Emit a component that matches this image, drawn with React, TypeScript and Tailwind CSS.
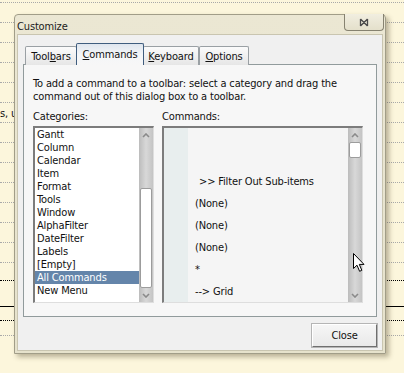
import React from "react";

const FONT = "[font-family:'DejaVu_Sans_Condensed','Liberation_Sans',sans-serif]";

const categories = [
  "Gantt",
  "Column",
  "Calendar",
  "Item",
  "Format",
  "Tools",
  "Window",
  "AlphaFilter",
  "DateFilter",
  "Labels",
  "[Empty]",
  "All Commands",
  "New Menu",
];

const commands = [">> Filter Out Sub-items", "(None)", "(None)", "(None)", "*", "--> Grid"];

function Chevron({ up }: { up?: boolean }) {
  return (
    <svg width="8" height="5" viewBox="0 0 8 5">
      <polyline
        points={up ? "1,4 4,1 7,4" : "1,1 4,4 7,1"}
        fill="none"
        stroke="#8a8a8a"
        strokeWidth="1.6"
      />
    </svg>
  );
}

function ScrollBar({ thumbTop, thumbHeight }: { thumbTop: string; thumbHeight: string }) {
  return (
    <div className="flex w-[14px] shrink-0 flex-col bg-linear-to-r from-[#bcbcbc] via-[#d8d8d8] to-[#c4c4c4]">
      <div className="flex h-[14px] shrink-0 items-center justify-center">
        <Chevron up />
      </div>
      <div className={`${thumbTop} shrink-0`} />
      <div className={`${thumbHeight} mx-[1px] shrink-0 rounded-[2px] border border-[#9c9c9c] bg-white`} />
      <div className="flex-1" />
      <div className="flex h-[14px] shrink-0 items-center justify-center">
        <Chevron />
      </div>
    </div>
  );
}

function Tab({ u, rest, pre, selected, w }: { pre?: string; u: string; rest: string; selected?: boolean; w: string }) {
  if (selected) {
    return (
      <div
        className={`${w} -mx-[1px] z-10 flex h-[22px] items-center justify-center rounded-t-[2px] border border-b-0 border-[#3f5d7e] bg-linear-to-b from-[#dfe6ee] via-[#f4f6f8] to-[#f7f7f7] text-[#111]`}
      >
        <span>
          {pre}
          <span className="underline">{u}</span>
          {rest}
        </span>
      </div>
    );
  }
  return (
    <div
      className={`${w} flex h-[19px] items-center justify-center rounded-t-[2px] border border-b-0 border-[#9aa0a4] bg-linear-to-b from-[#fbfbfb] to-[#e6e6e6] text-[#111]`}
    >
      <span>
        {pre}
        <span className="underline">{u}</span>
        {rest}
      </span>
    </div>
  );
}

function Cursor() {
  return (
    <svg width="13" height="20" viewBox="0 0 13 20" className="absolute left-[353px] top-[253px]">
      <path
        d="M0.5 0.5 L0.5 15.5 L4 12.2 L6.6 18.3 L8.8 17.3 L6.3 11.4 L11 11.4 Z"
        fill="#fff"
        stroke="#000"
        strokeWidth="1"
        strokeLinejoin="miter"
      />
    </svg>
  );
}

export default function App() {
  return (
    <div className={`relative h-[373px] w-[404px] overflow-hidden bg-[#fcf6dc] text-[11px] leading-[13px] tracking-[-0.15px] ${FONT}`}>
      {/* page behind the dialog */}
      <div className="flex flex-col">
        <div className="h-[3px] border-b border-dotted border-[#a9a9a9]" />
        <div className="h-[20px] border-b border-dotted border-[#a9a9a9]" />
        <div className="h-[20px] border-b border-dotted border-[#a9a9a9]" />
        <div className="h-[20px] border-b border-dotted border-[#a9a9a9]" />
        <div className="h-[20px] border-b border-dotted border-[#a9a9a9]" />
        <div className="h-[20px] border-b border-dotted border-[#a9a9a9]" />
        <div className="flex h-[20px] items-center border-b border-dotted border-[#a9a9a9] pt-[1px] text-[#111]">
          <span className="w-[14px] overflow-hidden whitespace-nowrap">s, u</span>
        </div>
        <div className="h-[20px] border-b border-dotted border-[#a9a9a9]" />
        <div className="h-[20px] border-b border-dotted border-[#a9a9a9]" />
        <div className="h-[20px] border-b border-dotted border-[#a9a9a9]" />
        <div className="h-[20px] border-b border-dotted border-[#a9a9a9]" />
        <div className="h-[20px] border-b border-dotted border-[#a9a9a9]" />
        <div className="h-[20px] border-b border-dotted border-[#a9a9a9]" />
        <div className="h-[20px] border-b border-dotted border-[#a9a9a9]" />
        <div className="h-[18px] border-b border-dotted border-black" />
        <div className="h-[26px] border-b border-black" />
        <div className="h-[14px] border-b border-dotted border-black" />
        <div className="h-[15px] border-b border-dotted border-[#a9a9a9]" />
      </div>

      {/* Customize dialog */}
      <div className="absolute left-[14px] top-[14px] flex h-[340px] w-[372px] flex-col rounded-t-[4px] border border-[#a19d88] bg-linear-to-b from-[#ebe7d3] to-[#e6e2cc] shadow-[3px_3px_5px_rgba(60,50,20,0.35)]">
        <div className="flex h-[19px] shrink-0 items-center pl-[2px] pt-[3px] text-[#1b1b1b]">Customize</div>
        <div className="absolute right-[1px] top-[-1px] flex h-[17px] w-[40px] items-center justify-center rounded-b-[4px] border border-t-0 border-[#868270] bg-linear-to-b from-[#f1eee0] to-[#e4e0cb]">
          <svg width="10" height="9" viewBox="0 0 10 9">
            <path d="M1.5 1 V8 M8.5 1 V8 M1.5 1 L8.5 8 M8.5 1 L1.5 8" stroke="#4a4a4a" strokeWidth="1.3" fill="none" />
          </svg>
        </div>

        <div className="mx-[2px] mb-[2px] flex flex-1 flex-col border border-[#c9c5b0] bg-[#f0f0f0] px-[5px] pt-[8px] text-[#111]">
          {/* tabs */}
          <div className="relative z-10 -mb-[1px] flex items-end pl-[2px]">
            <Tab w="w-[52px]" pre="Tool" u="b" rest="ars" />
            <Tab w="w-[68px]" u="C" rest="ommands" selected />
            <Tab w="w-[56px]" u="K" rest="eyboard" />
            <Tab w="w-[50px]" u="O" rest="ptions" />
          </div>

          <div className="flex h-[253px] flex-col border border-[#919b9c] bg-[#f7f7f7] pl-[9px] pt-[12px]">
            <p>To add a command to a toolbar: select a category and drag the</p>
            <p>command out of this dialog box to a toolbar.</p>

            <div className="mt-[7px] flex gap-[8px]">
              <div className="flex w-[121px] flex-col">
                <div>Categories:</div>
                <div className="mt-[3px] flex h-[177px] border-l-2 border-t-2 border-r border-b border-l-[#7c7c7c] border-t-[#7c7c7c] border-r-[#dedede] border-b-[#dedede] bg-white">
                  <ul className="flex-1">
                    {categories.map((c) => (
                      <li
                        key={c}
                        className={c === "All Commands" ? "h-[13px] bg-[#6485aa] pl-[2px] text-white" : "h-[13px] pl-[2px]"}
                      >
                        {c}
                      </li>
                    ))}
                  </ul>
                  <ScrollBar thumbTop="h-[46px]" thumbHeight="h-[100px]" />
                </div>
              </div>

              <div className="flex w-[201px] flex-col">
                <div>Commands:</div>
                <div className="mt-[3px] flex h-[177px] border-l-2 border-t-2 border-r border-b border-l-[#7c7c7c] border-t-[#7c7c7c] border-r-[#dedede] border-b-[#dedede] bg-[#f5f5f5]">
                  <div className="w-[24px] shrink-0 bg-[#e8eeee]" />
                  <ul className="flex-1 pl-[7px] pt-[42px]">
                    {commands.map((c, i) => (
                      <li key={i} className={i === 0 ? "flex h-[22px] items-center pl-[4px]" : "flex h-[22px] items-center"}>
                        {c}
                      </li>
                    ))}
                  </ul>
                  <ScrollBar thumbTop="h-0" thumbHeight="h-[16px]" />
                </div>
              </div>
            </div>
          </div>

          <div className="mt-[7px] flex justify-end">
            <button className="flex h-[23px] w-[65px] items-center justify-center border border-t-white border-l-white border-r-[#6f6f6f] border-b-[#6f6f6f] bg-linear-to-b from-[#f6f6f6] to-[#e9e9e9] shadow-[0_0_0_1px_#b5b5b5]">
              Close
            </button>
          </div>
        </div>
      </div>

      <Cursor />
    </div>
  );
}
